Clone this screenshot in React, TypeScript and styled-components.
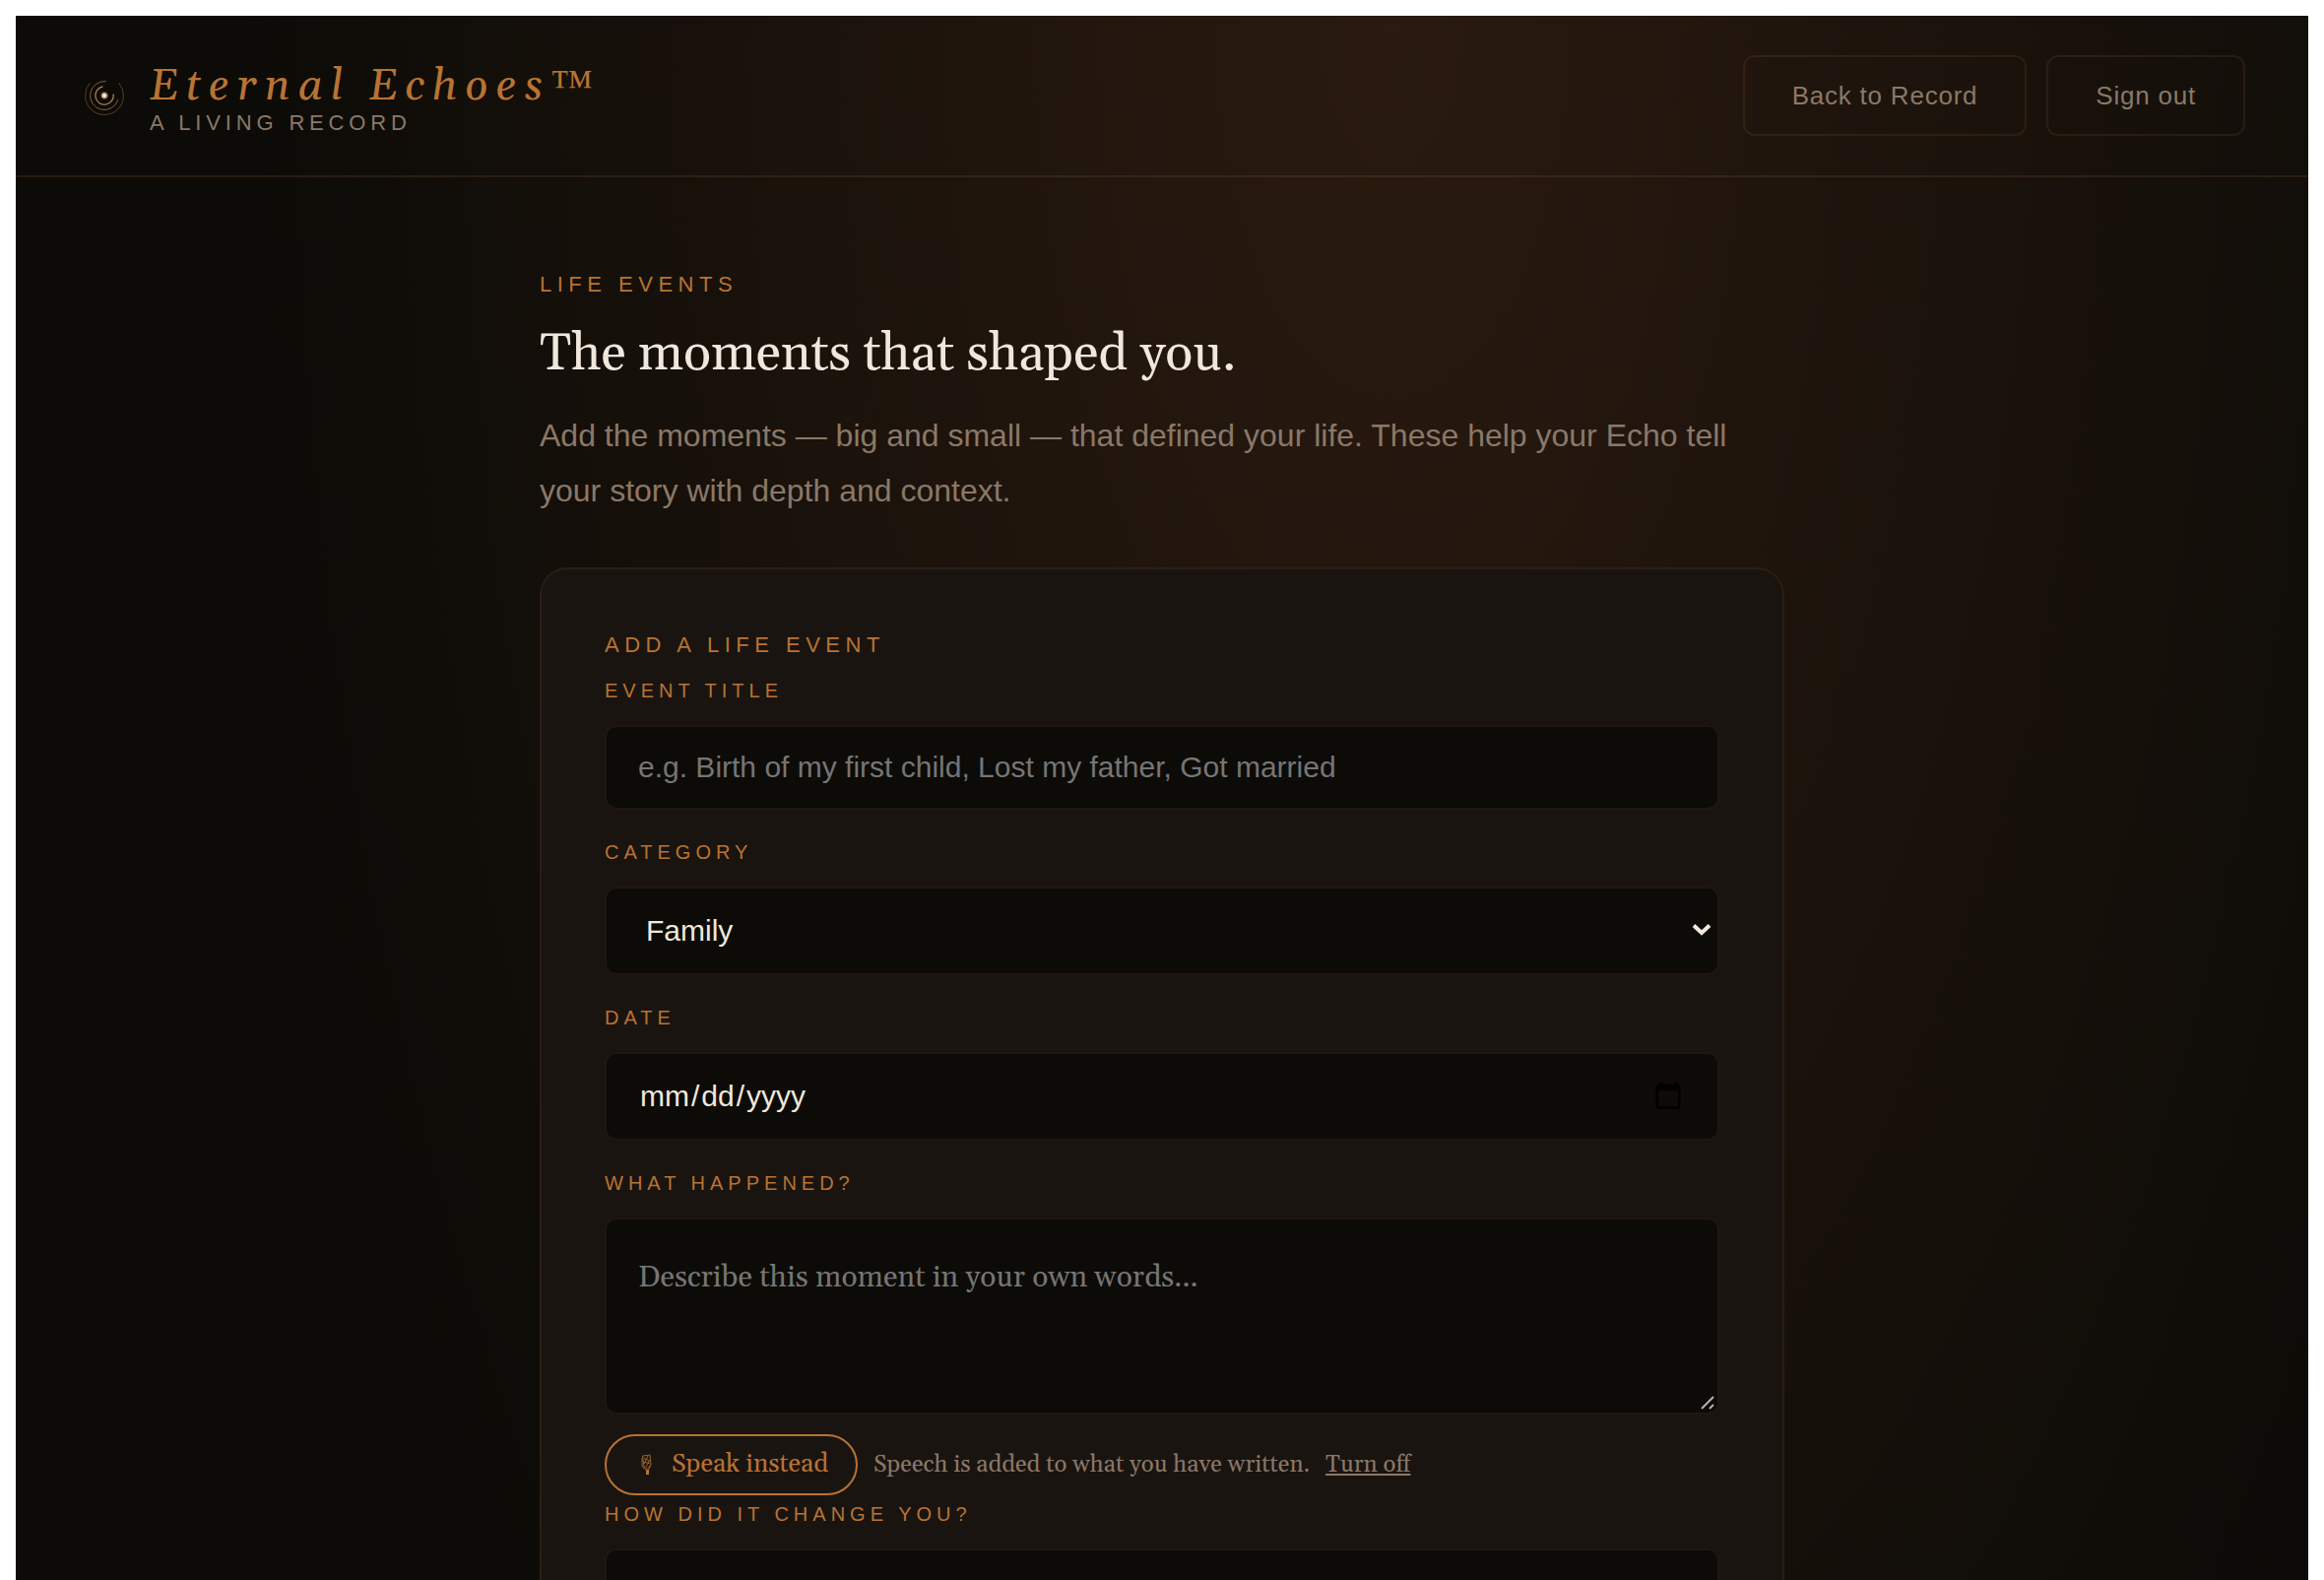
import React from "react";
import styled, { createGlobalStyle } from "styled-components";

const sans = `"Liberation Sans", Arial, sans-serif`;
const serif = `Georgia, Gelasio, serif`;

const copper = "#b87333";
const cream = "#f0e8dc";
const muted = "#8a7868";
const ink = "#0c0b07";
const line = "#2a1e14";

const GlobalStyle = createGlobalStyle`
  *, *::before, *::after { box-sizing: border-box; }
  html { background: #fff; }
  body { margin: 16px 16px 0; }
`;

const Window = styled.div`
  height: calc(100vh - 16px);
  overflow: hidden;
`;

const Page = styled.div`
  min-height: 100%;
  background: ${ink} radial-gradient(50% 2500px at 60% 0%, #2a1a10 0%, ${ink} 100%);
  color: ${cream};
  font-family: ${sans};
`;

const Header = styled.header`
  display: flex;
  align-items: center;
  justify-content: space-between;
  padding: 40px 64px;
  border-bottom: 2px solid rgba(184, 128, 84, 0.14);
`;

const Brand = styled.div`
  display: flex;
  align-items: center;
  gap: 20px;
`;

const BrandText = styled.div`
  padding-top: 8px;
`;

const BrandName = styled.div`
  font: italic 400 44px/48px ${serif};
  letter-spacing: 0.18em;
  color: ${copper};
`;

const Trademark = styled.span`
  font-family: "Liberation Serif", serif;
  font-style: normal;
  line-height: 1;
`;

const Tagline = styled.div`
  font-size: 22px;
  line-height: 26px;
  letter-spacing: 0.22em;
  text-transform: uppercase;
  color: ${muted};
`;

const Actions = styled.nav`
  display: flex;
  gap: 20px;
`;

const GhostButton = styled.button`
  padding: 24px 48px;
  border: 2px solid rgba(184, 115, 51, 0.13);
  border-radius: 12px;
  background: transparent;
  color: ${muted};
  font: 400 26px/30px ${sans};
  letter-spacing: 0.03em;
`;

const Main = styled.main`
  max-width: 1360px;
  margin: 0 auto;
  padding: 96px 48px;
`;

const Eyebrow = styled.p`
  margin: 0;
  font-size: 22px;
  line-height: 26px;
  letter-spacing: 0.25em;
  text-transform: uppercase;
  color: ${copper};
`;

const Title = styled.h1`
  margin: 24px 0 20px;
  font: 400 52px/68px ${serif};
`;

const Intro = styled.p`
  margin: 0 0 50px;
  font-size: 32px;
  line-height: 56px;
  color: ${muted};
`;

const Card = styled.form`
  padding: 64px;
  border: 2px solid ${line};
  border-radius: 28px;
  background: #1a1410;
`;

const CardTitle = styled(Eyebrow).attrs({ as: "h2" })`
  margin-bottom: 14px;
  font-weight: 400;
`;

const Field = styled.div<{ $flush?: boolean }>`
  margin-bottom: ${(p) => (p.$flush ? 0 : 24)}px;
`;

const Label = styled.label`
  display: block;
  margin-bottom: 16px;
  font-size: 20px;
  line-height: 38px;
  letter-spacing: 0.25em;
  text-transform: uppercase;
  color: ${copper};
`;

const control = `
  display: block;
  width: 100%;
  padding: 24px 32px;
  border: 2px solid #1f160e;
  border-radius: 12px;
  outline: none;
  background: ${ink};
  color: ${cream};
  font: 400 30px/34px ${sans};
  &::placeholder { color: #757575; }
`;

const TextInput = styled.input`
  ${control}
  height: 86px;
`;

const DateInput = styled.input`
  ${control}
  height: 90px;
  &::-webkit-datetime-edit-month-field,
  &::-webkit-datetime-edit-day-field,
  &::-webkit-datetime-edit-year-field {
    padding: 0 2px;
  }
  &::-webkit-calendar-picker-indicator {
    padding: 2px;
    width: 32px;
    height: 32px;
  }
`;

const Select = styled.select`
  ${control}
  height: 90px;
  padding: 24px 40px;
  appearance: none;
`;

const TextArea = styled.textarea`
  ${control}
  height: 200px;
  padding-top: 32px;
  font: 400 30px/54px ${serif};
  resize: none;
`;

const Control = styled.div`
  position: relative;
`;

const Chevron = styled.svg`
  position: absolute;
  right: 8px;
  top: 50%;
  margin-top: -8px;
  pointer-events: none;
`;

const Grip = styled.svg`
  position: absolute;
  right: 4px;
  bottom: 4px;
  pointer-events: none;
`;

const SpeakRow = styled.div`
  display: flex;
  align-items: center;
  gap: 16px;
  margin-top: 20px;
  font: 400 24px/30px ${serif};
  color: ${muted};
`;

const SpeakButton = styled.button`
  display: flex;
  align-items: center;
  gap: 16px;
  height: 62px;
  padding: 0 28px;
  border: 2px solid ${copper};
  border-radius: 32px;
  background: transparent;
  color: ${copper};
  font: 400 26px/30px ${serif};
`;

const TurnOff = styled.button`
  padding: 0;
  border: 0;
  background: none;
  color: inherit;
  font: inherit;
  text-decoration: underline;
`;

const Logo = () => (
  <svg width="52" height="52" viewBox="0 0 52 52" fill="none" aria-hidden="true">
    <defs>
      <radialGradient id="core">
        <stop offset="0" stopColor="#fff8ec" />
        <stop offset="0.4" stopColor="#f3d9bd" />
        <stop offset="1" stopColor="#b87333" stopOpacity="0" />
      </radialGradient>
    </defs>
    <g stroke="#c08a55" strokeLinecap="round">
      <path d="M11 13.5A19.5 19.5 0 1 0 41 13.5" strokeOpacity="0.4" />
      <path d="M27.500 11.600A14.500 14.500 0 1 0 39.800 30.500" strokeOpacity="0.65" />
      <path d="M24 17A9.200 9.200 0 1 0 35.200 25" strokeOpacity="0.9" strokeWidth="1.300" />
    </g>
    <circle cx="26" cy="26" r="4.500" fill="url(#core)" />
  </svg>
);

const Mic = () => (
  <svg width="22" height="24" viewBox="0 0 22 24" fill="none" stroke="currentColor" aria-hidden="true">
    <path d="M8.500 3L16 2L17 12L13.500 16L10 14Z" strokeOpacity="0.8" />
    <path d="M10 5l5 3M10 9l6 2M14 3l-4 8M16 7l-4 7" strokeOpacity="0.8" />
    <path d="M8 5v8q2 4 5 4.500M16.500 13l-2 4" strokeOpacity="0.8" />
    <path d="M13.500 17v5" strokeWidth="3" />
  </svg>
);

export default function App() {
  return (
    <>
      <GlobalStyle />
      <Window>
        <Page>
          <Header>
            <Brand>
              <Logo />
              <BrandText>
                <BrandName>
                  Eternal Echoes<Trademark>™</Trademark>
                </BrandName>
                <Tagline>A Living Record</Tagline>
              </BrandText>
            </Brand>
            <Actions>
              <GhostButton type="button">Back to Record</GhostButton>
              <GhostButton type="button">Sign out</GhostButton>
            </Actions>
          </Header>
          <Main>
            <Eyebrow>Life Events</Eyebrow>
            <Title>The moments that shaped you.</Title>
            <Intro>
              Add the moments — big and small — that defined your life. These help your Echo tell your story with depth
              and context.
            </Intro>
            <Card>
              <CardTitle>Add a life event</CardTitle>
              <Field>
                <Label htmlFor="title">Event title</Label>
                <TextInput id="title" placeholder="e.g. Birth of my first child, Lost my father, Got married" />
              </Field>
              <Field>
                <Label htmlFor="category">Category</Label>
                <Control>
                  <Select id="category" defaultValue="Family">
                    <option>Family</option>
                  </Select>
                  <Chevron width="20" height="14" viewBox="0 0 20 14" fill="none" stroke={cream} strokeWidth="4">
                    <path d="M2 2.500L10 10L18 2.500" />
                  </Chevron>
                </Control>
              </Field>
              <Field>
                <Label htmlFor="date">Date</Label>
                <DateInput id="date" type="date" />
              </Field>
              <Field $flush>
                <Label htmlFor="what">What happened?</Label>
                <Control>
                  <TextArea id="what" placeholder="Describe this moment in your own words..." />
                  <Grip width="16" height="16" viewBox="0 0 16 16" stroke="#b5b3ae" strokeWidth="2">
                    <path d="M2 14L14 2M10 14L14 10" />
                  </Grip>
                </Control>
                <SpeakRow>
                  <SpeakButton type="button">
                    <Mic />
                    Speak instead
                  </SpeakButton>
                  <span>Speech is added to what you have written.</span>
                  <TurnOff type="button">Turn off</TurnOff>
                </SpeakRow>
              </Field>
              <Field>
                <Label htmlFor="change">How did it change you?</Label>
                <TextArea id="change" />
              </Field>
            </Card>
          </Main>
        </Page>
      </Window>
    </>
  );
}
